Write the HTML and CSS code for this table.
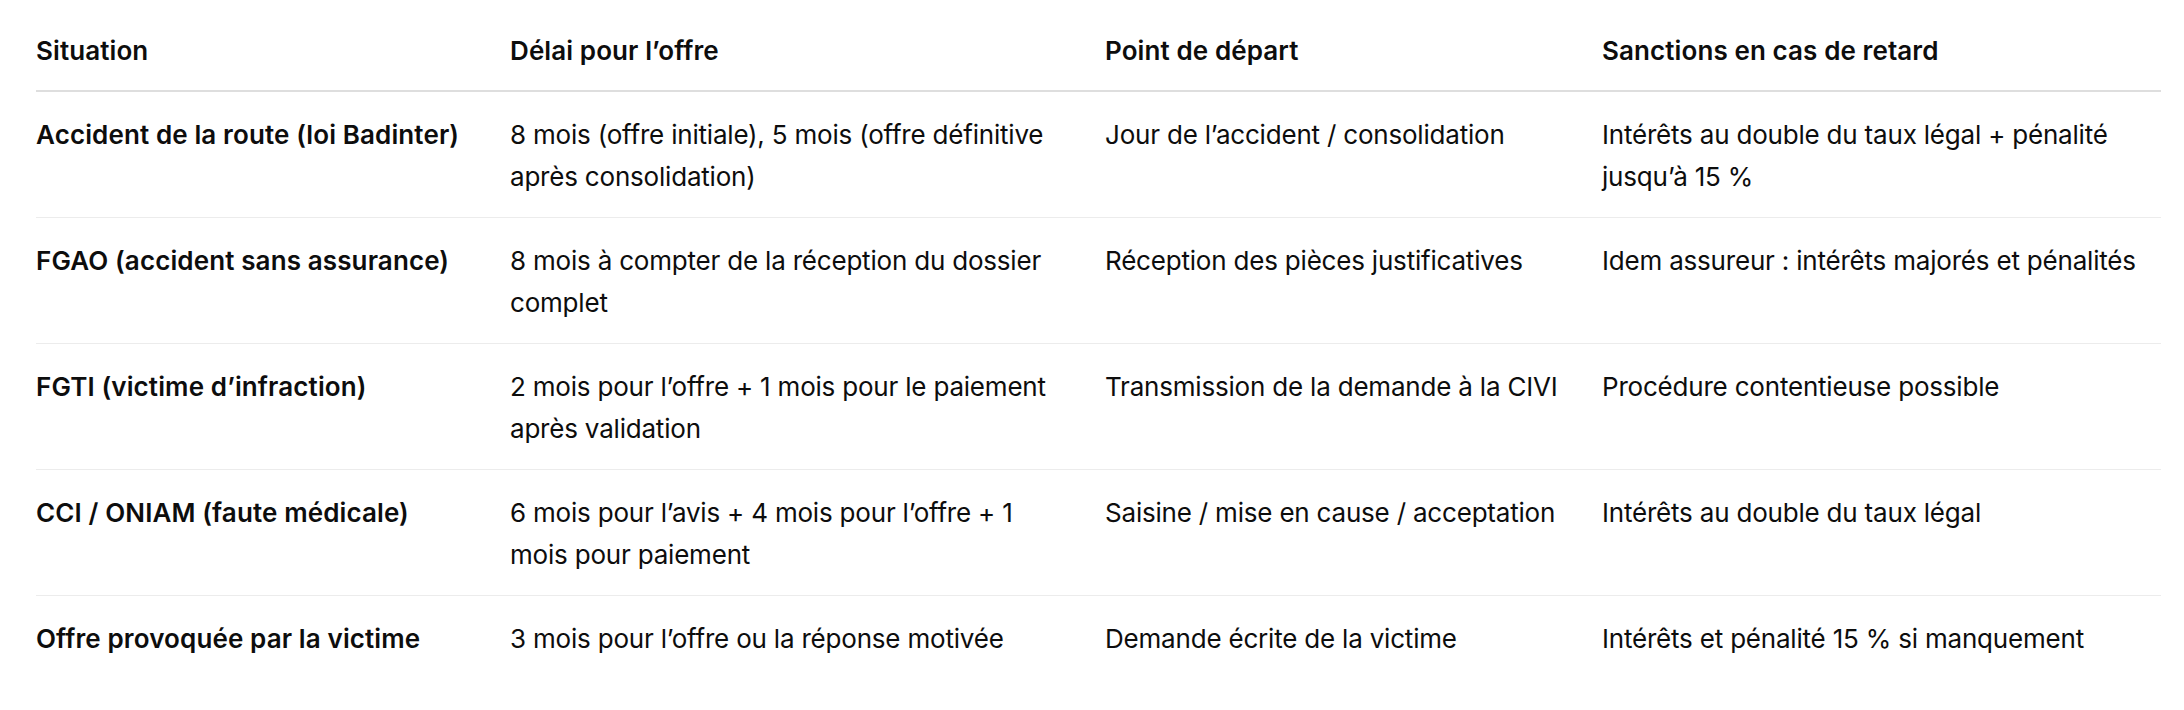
FILE: index.html
```html
<!DOCTYPE html>
<html lang="fr">
<head>
<meta charset="utf-8">
<link rel="stylesheet" href="styles.css">
</head>
<body>
<div class="wrap">
<table class="grid">
<colgroup>
<col class="c1"><col class="c2"><col class="c3"><col class="c4">
</colgroup>
<thead>
<tr><th>Situation</th><th>Délai pour l’offre</th><th>Point de départ</th><th>Sanctions en cas de retard</th></tr>
</thead>
<tbody>
<tr><td class="k">Accident de la route (loi Badinter)</td><td>8 mois (offre initiale), 5 mois (offre définitive après consolidation)</td><td>Jour de l’accident / consolidation</td><td>Intérêts au double du taux légal + pénalité jusqu’à 15 %</td></tr>
<tr><td class="k">FGAO (accident sans assurance)</td><td>8 mois à compter de la réception du dossier complet</td><td>Réception des pièces justificatives</td><td>Idem assureur : intérêts majorés et pénalités</td></tr>
<tr><td class="k">FGTI (victime d’infraction)</td><td>2 mois pour l’offre + 1 mois pour le paiement après validation</td><td>Transmission de la demande à la CIVI</td><td>Procédure contentieuse possible</td></tr>
<tr><td class="k">CCI / ONIAM (faute médicale)</td><td>6 mois pour l’avis + 4 mois pour l’offre + 1 mois pour paiement</td><td>Saisine / mise en cause / acceptation</td><td>Intérêts au double du taux légal</td></tr>
<tr><td class="k">Offre provoquée par la victime</td><td>3 mois pour l’offre ou la réponse motivée</td><td>Demande écrite de la victime</td><td>Intérêts et pénalité 15 % si manquement</td></tr>
</tbody>
</table>
</div>
</body>
</html>
```
FILE: styles.css
```css
html, body { margin: 0; padding: 0; background: #ffffff; }
body {
  font-family: Inter, "Noto Sans", "Liberation Sans", sans-serif;
  color: #0d0d0d;
  font-size: 26px;
  line-height: 42px;
}
.wrap { padding: 8px 23px 0 36px; }
.grid {
  width: 2125px;
  border-collapse: collapse;
  table-layout: fixed;
}
.c1 { width: 474px; }
.c2 { width: 595px; }
.c3 { width: 497px; }
.c4 { width: 559px; }
.grid th {
  text-align: left;
  font-weight: 600;
  letter-spacing: 0.1px;
  padding: 22px 36px 18px 0;
  border-bottom: 2px solid #dedede;
  vertical-align: top;
}
.grid td {
  padding: 22px 36px 19px 0;
  vertical-align: top;
  letter-spacing: -0.2px;
  border-bottom: 1px solid #ececec;
}
.grid th:last-child, .grid td:last-child { padding-right: 0; }
.grid tbody tr:last-child td { border-bottom: none; }
.grid td.k { font-weight: 600; letter-spacing: 0.12px; }
```
